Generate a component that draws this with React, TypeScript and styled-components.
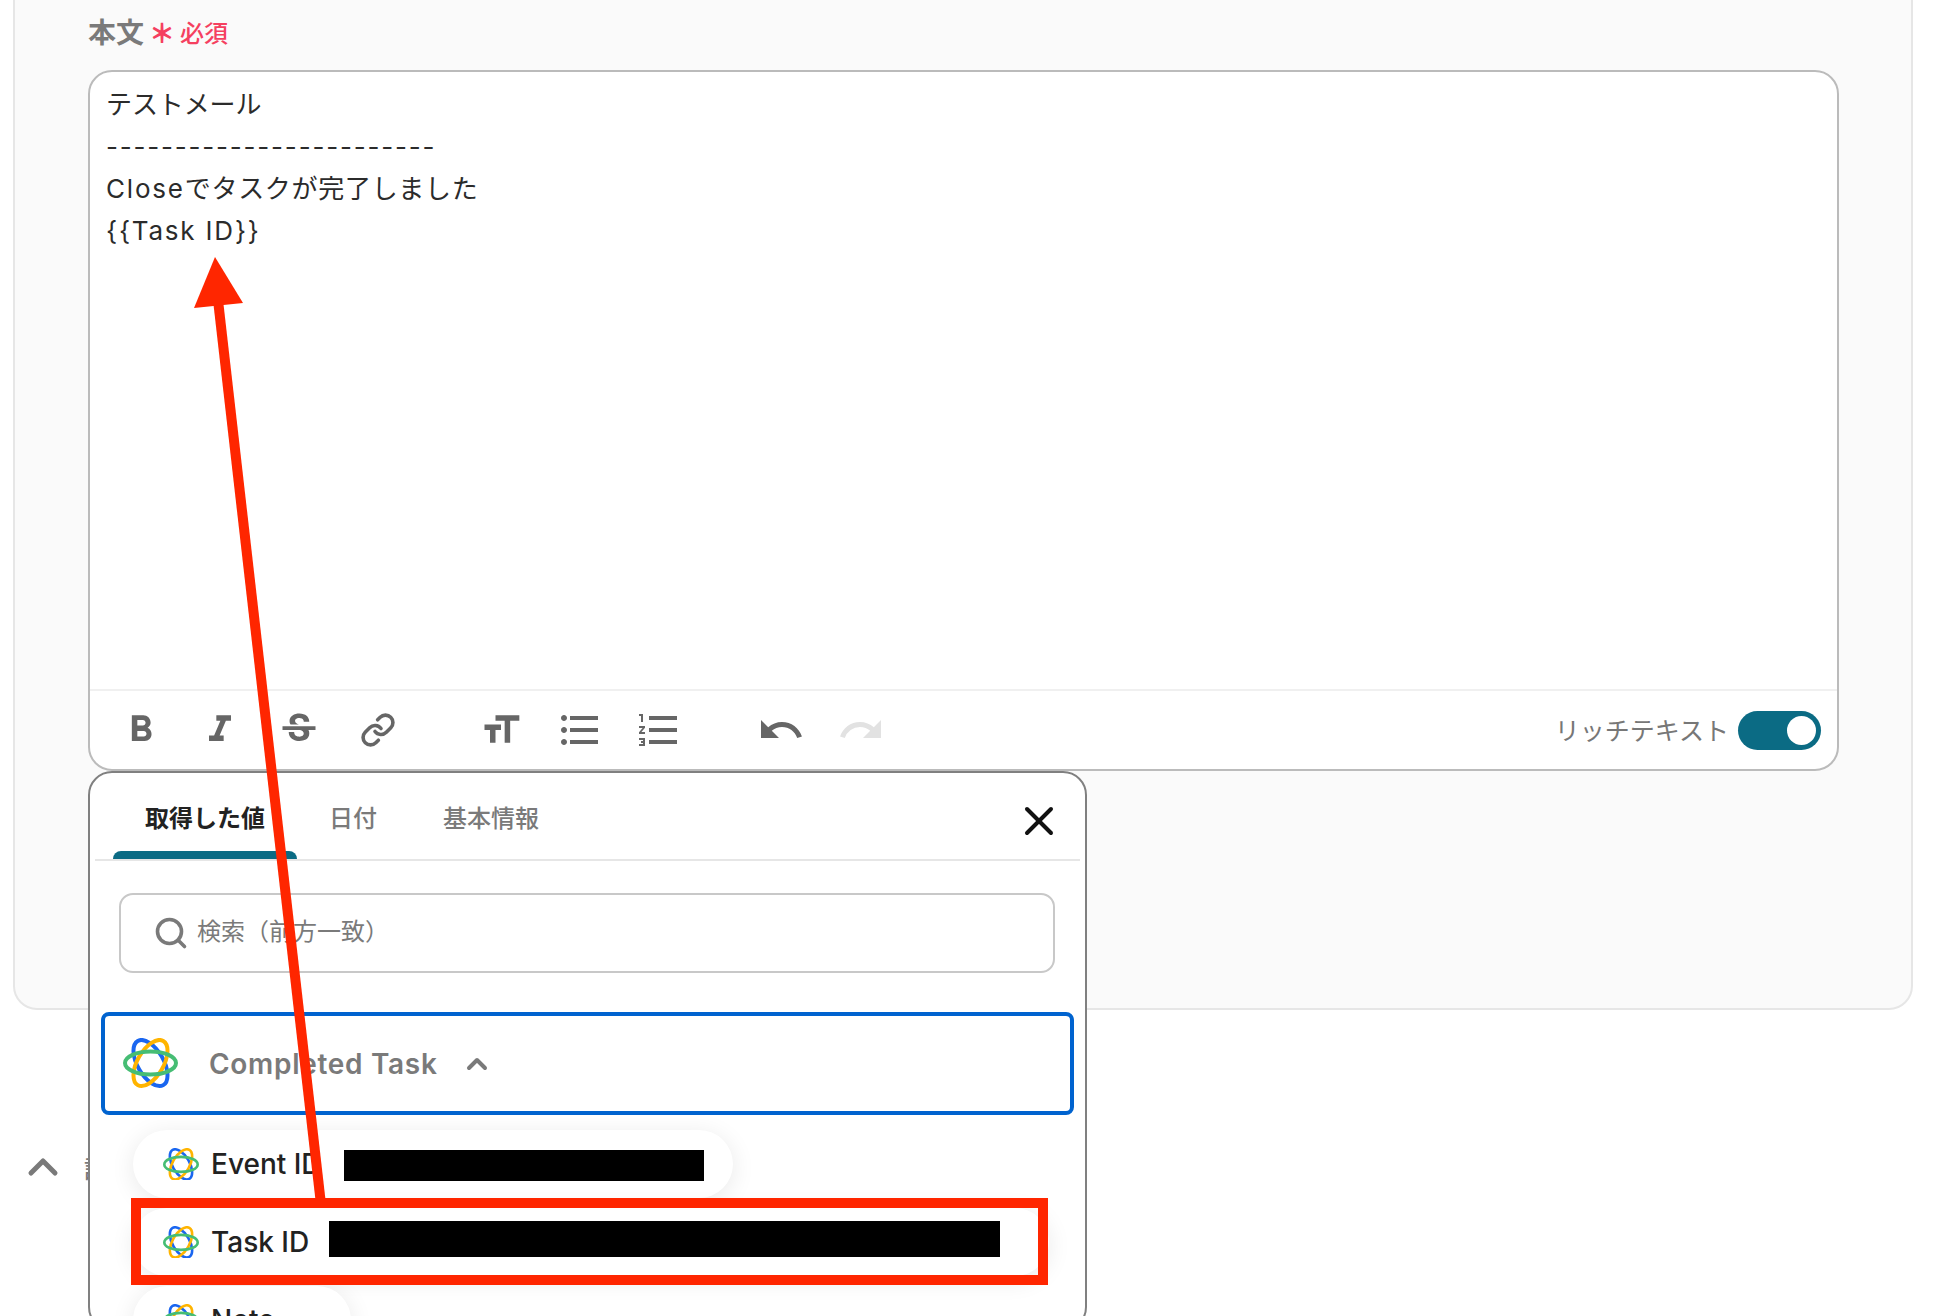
import React from "react";
import styled, { createGlobalStyle } from "styled-components";
import {
  MdFormatBold,
  MdFormatItalic,
  MdStrikethroughS,
  MdFormatSize,
  MdFormatListBulleted,
  MdFormatListNumbered,
  MdUndo,
  MdRedo,
} from "react-icons/md";
import { FiChevronUp, FiLink, FiSearch, FiX } from "react-icons/fi";

const GlobalStyle = createGlobalStyle`
  html, body {
    margin: 0;
    background: #fff;
    font-family: Inter, "Noto Sans CJK JP", sans-serif;
  }
`;

const Page = styled.div`
  position: relative;
  width: 1940px;
  height: 1316px;
  overflow: hidden;
  background: #fff;
`;

const Panel = styled.section`
  box-sizing: border-box;
  width: 1900px;
  height: 1012px;
  margin: -2px 0 0 13px;
  padding: 16px 72px 0 73px;
  background: #fafafa;
  border: 2px solid #e6e6e6;
  border-radius: 0 0 24px 24px;
`;

const Label = styled.div`
  display: flex;
  align-items: center;
  gap: 5px;
  height: 30px;
  margin-bottom: 24px;
  font-size: 28px;
  font-weight: 600;
  color: #7a7a7a;
`;

const Asterisk = styled.span`
  font-size: 26px;
  font-weight: 900;
  color: #f5405f;
`;

const Required = styled.span`
  font-size: 24px;
  font-weight: 500;
  color: #f5405f;
`;

const Editor = styled.div`
  box-sizing: border-box;
  width: 1751px;
  height: 701px;
  background: #fff;
  border: 2px solid #bbb;
  border-radius: 24px;
  display: flex;
  flex-direction: column;
`;

const EditorBody = styled.div`
  flex: 1;
  padding: 12px 16px 0;
  font-size: 26px;
  line-height: 42px;
  letter-spacing: 0.7px;
  color: #2b2b2b;
`;

const Subject = styled.div`
  letter-spacing: -0.1px;
`;

const Latin = styled.span`
  letter-spacing: 1.8px;
`;

const Toolbar = styled.div`
  height: 78px;
  display: flex;
  align-items: center;
  padding: 0 16px 0 29px;
  border-top: 2px solid #f0f0f0;
`;

const ToolGroup = styled.div<{ $gap: number; $after: number }>`
  display: flex;
  align-items: center;
  gap: ${(p) => p.$gap}px;
  margin-right: ${(p) => p.$after}px;
`;

const ToolIcon = styled.span<{ $off?: boolean; $size?: number }>`
  display: flex;
  justify-content: center;
  width: 44px;
  font-size: ${(p) => p.$size ?? 44}px;
  color: ${(p) => (p.$off ? "#e2e2e2" : "#666")};

  svg {
    flex-shrink: 0;
  }
`;

const ToggleWrap = styled.div`
  margin-left: auto;
  display: flex;
  align-items: center;
  gap: 9px;
  font-size: 25px;
  color: #777;
`;

const ToggleLabel = styled.span`
  margin-top: -3px;
`;

const Toggle = styled.div`
  box-sizing: border-box;
  width: 83px;
  height: 39px;
  padding: 5px;
  border-radius: 20px;
  background: #0b6b84;
  display: flex;
  justify-content: flex-end;
`;

const Knob = styled.div`
  width: 29px;
  height: 29px;
  border-radius: 50%;
  background: #fff;
`;

const Section = styled.div`
  display: flex;
  align-items: center;
  gap: 17px;
  margin: 133px 0 0 19px;
  color: #7a7a7a;
  font-size: 24px;
  font-weight: 500;
`;

const Popover = styled.div`
  position: absolute;
  left: 88px;
  top: 771px;
  box-sizing: border-box;
  width: 999px;
  height: 560px;
  padding: 0 5px;
  background: #fff;
  border: 2px solid #808080;
  border-radius: 24px;
`;

const Tabs = styled.div`
  display: flex;
  align-items: flex-end;
  height: 86px;
  padding-left: 18px;
  border-bottom: 2px solid #e6e6e6;
  position: relative;
`;

const Tab = styled.div<{ $active?: boolean; $w: number }>`
  position: relative;
  box-sizing: border-box;
  width: ${(p) => p.$w}px;
  height: 57px;
  padding-top: 2px;
  font-size: 24px;
  line-height: 30px;
  text-align: center;
  font-weight: ${(p) => (p.$active ? 600 : 500)};
  color: ${(p) => (p.$active ? "#222" : "#7a7a7a")};

  &::after {
    content: "";
    display: ${(p) => (p.$active ? "block" : "none")};
    position: absolute;
    left: 0;
    right: 0;
    bottom: 0;
    height: 8px;
    background: #0b6b84;
    border-radius: 8px 8px 0 0;
  }
`;

const Close = styled.div`
  position: absolute;
  right: 17px;
  top: 24px;
  display: flex;
  font-size: 48px;
  color: #111;
`;

const Search = styled.div`
  box-sizing: border-box;
  display: flex;
  align-items: center;
  gap: 8px;
  width: 936px;
  height: 80px;
  margin: 32px 0 39px 24px;
  padding-left: 32px;
  border: 2px solid #c8c8c8;
  border-radius: 14px;
  font-size: 24px;
  line-height: 30px;
  color: #7a7a7a;
`;

const SearchText = styled.span`
  margin-top: -2px;
`;

const Group = styled.div`
  box-sizing: border-box;
  display: flex;
  align-items: center;
  width: 973px;
  height: 103px;
  margin-left: 6px;
  padding-left: 18px;
  border: 4px solid #0063cf;
  border-radius: 8px;
  font-size: 28px;
  font-weight: 600;
  letter-spacing: 0.7px;
  color: #7a7a7a;
`;

const GroupName = styled.span`
  margin: 0 23px 0 31px;
`;

const Items = styled.div`
  display: flex;
  flex-direction: column;
  gap: 10px;
  margin: 15px 0 0 38px;
`;

const Pill = styled.div<{ $w: number }>`
  box-sizing: border-box;
  display: flex;
  align-items: center;
  width: ${(p) => p.$w}px;
  height: 68px;
  padding-left: 30px;
  background: #fff;
  border-radius: 34px;
  box-shadow: 0 4px 24px rgba(0, 0, 0, 0.09);
  font-size: 28px;
  font-weight: 500;
  color: #222;
`;

const PillName = styled.span`
  margin-left: 12px;
`;

const Redacted = styled.div<{ $w: number; $h: number; $ml: number; $mt: number }>`
  width: ${(p) => p.$w}px;
  height: ${(p) => p.$h}px;
  margin: ${(p) => p.$mt}px 0 0 ${(p) => p.$ml}px;
  background: #000;
`;

const Highlight = styled.div`
  position: absolute;
  left: 131px;
  top: 1198px;
  box-sizing: border-box;
  width: 917px;
  height: 87px;
  border: 10px solid #ff2600;
`;

const Arrow = styled.svg`
  position: absolute;
  left: 0;
  top: 0;
  pointer-events: none;
`;

const Logo: React.FC<{ size: number }> = ({ size }) => (
  <svg width={size} height={size * 0.91} viewBox="0 0 55 50" fill="none" strokeWidth="4">
    <ellipse cx="27.5" cy="25" rx="25.5" ry="13" transform="rotate(60 27.5 25)" stroke="#1a66f0" />
    <ellipse cx="27.5" cy="25" rx="25.5" ry="13" transform="rotate(-60 27.5 25)" stroke="#ffb400" />
    <ellipse cx="27.5" cy="25" rx="25.5" ry="11.5" stroke="#46bd74" />
  </svg>
);

const App: React.FC = () => (
  <Page>
    <GlobalStyle />
    <Panel>
      <Label>
        本文
        <Asterisk>＊</Asterisk>
        <Required>必須</Required>
      </Label>
      <Editor>
        <EditorBody>
          <Subject>テストメール</Subject>
          <div><Latin>------------------------</Latin></div>
          <div><Latin>Close</Latin>でタスクが完了しました</div>
          <div><Latin>{"{{Task ID}}"}</Latin></div>
        </EditorBody>
        <Toolbar>
          <ToolGroup $gap={35} $after={79}>
            <ToolIcon><MdFormatBold /></ToolIcon>
            <ToolIcon><MdFormatItalic /></ToolIcon>
            <ToolIcon><MdStrikethroughS /></ToolIcon>
            <ToolIcon $size={36}><FiLink strokeWidth={2.4} /></ToolIcon>
          </ToolGroup>
          <ToolGroup $gap={35} $after={78}>
            <ToolIcon><MdFormatSize /></ToolIcon>
            <ToolIcon $size={48}><MdFormatListBulleted /></ToolIcon>
            <ToolIcon $size={48}><MdFormatListNumbered /></ToolIcon>
          </ToolGroup>
          <ToolGroup $gap={36} $after={0}>
            <ToolIcon $size={48}><MdUndo /></ToolIcon>
            <ToolIcon $size={48} $off><MdRedo /></ToolIcon>
          </ToolGroup>
          <ToggleWrap>
            <ToggleLabel>リッチテキスト</ToggleLabel>
            <Toggle>
              <Knob />
            </Toggle>
          </ToggleWrap>
        </Toolbar>
      </Editor>
    </Panel>
    <Section>
      <FiChevronUp size={48} strokeWidth={2.5} />
      詳細を設定
    </Section>
    <Popover>
      <Tabs>
        <Tab $active $w={184}>取得した値</Tab>
        <Tab $w={112}>日付</Tab>
        <Tab $w={164}>基本情報</Tab>
        <Close><FiX strokeWidth={2} /></Close>
      </Tabs>
      <Search>
        <FiSearch size={36} strokeWidth={2.4} />
        <SearchText>検索（前方一致）</SearchText>
      </Search>
      <Group>
        <Logo size={55} />
        <GroupName>Completed Task</GroupName>
        <FiChevronUp size={32} strokeWidth={3} />
      </Group>
      <Items>
        <Pill $w={600}>
          <Logo size={36} />
          <PillName>Event ID</PillName>
          <Redacted $w={360} $h={31} $ml={22} $mt={3} />
        </Pill>
        <Pill $w={916}>
          <Logo size={36} />
          <PillName>Task ID</PillName>
          <Redacted $w={671} $h={36} $ml={20} $mt={-6} />
        </Pill>
        <Pill $w={218}>
          <Logo size={36} />
          <PillName>Note</PillName>
        </Pill>
      </Items>
    </Popover>
    <Highlight />
    <Arrow width="1940" height="1316" viewBox="0 0 1940 1316">
      <line x1="320.5" y1="1200" x2="218" y2="300" stroke="#ff2600" strokeWidth="10" />
      <polygon points="215,257 194,308 243,303" fill="#ff2600" />
    </Arrow>
  </Page>
);

export default App;
